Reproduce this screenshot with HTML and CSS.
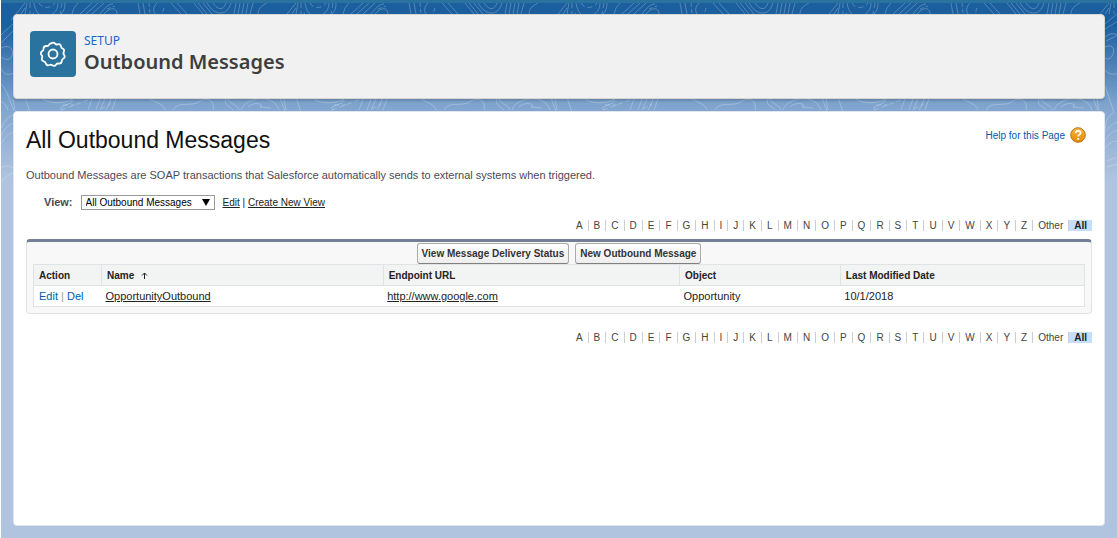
FILE: index.html
```html
<!DOCTYPE html>
<html lang="en">

<head>
    <meta charset="UTF-8">
    <meta name="viewport" content="width=device-width, initial-scale=1.0">
    <title>Outbound Messages</title>
    <link rel="stylesheet" href="styles.css">
</head>

<body>
    <svg class="page-pattern" aria-hidden="true">
        <defs>
            <pattern id="topography" width="271" height="196" patternUnits="userSpaceOnUse">
                <g fill="none" stroke="#fff" stroke-opacity=".24">
                    <path d="M15 14L24 3M10 20l5-6M20 14l4-6M26 3l-2 11M33 3c2 12 7 13 12 13s12-4 12-13M64 3c0 5-1 8-4 11M71 14l2-6 4-5" />
                    <path d="M38 3c3 6 12 6 16 0M29 3v11M61 3l-2 11" stroke-dasharray="5 3" />
                    <path d="M79 14l12-11M85 14L97 3M91 14l12-11M99 14c5-6 8-10 13-10M103 14c7-8 13-6 13 0M137 3l2 11M142 3l2 11M156 3c-4 4-4 8-2 11" />
                    <path d="M106 9l8-3M148 3l1 11M163 8l-2 6" stroke-dasharray="4 2" />
                    <path d="M170 3l10 11M176 3l10 11M193 3l9 11M197 3l9 11M202 3l9 11M206 3c5 8 9 10 14 10s8-4 10-10M212 3c5 7 10 8 13 0M235 3l-2 11M239 3l-2 11M243 3l-2 11M247 3l-2 11M252 3l-3 11M266 3c-6 3-9 6-9 11" />
                    <path d="M0 35l13-12M0 43l13-13M20 24l13-11M20 29l13-8M21 41l12-6M0 48c10-5 13 3 11 8s-7 4-11 1M20 47c7-3 10 1 8 7-2 5-6 6-8 4M0 68c3 8 8 7 13 5M20 70c4 5 9 5 13 3M20 37c5-4 9-4 13-2" />
                    <path d="M0 84c5 4 9 17 13 27M20 86c3 8 6 17 9 27-8 3-8 10-9 17M95 110l4-11M99 110l5-11M105 110c3-5 4-8 5-11M111 110l4-11M149 99c7 4 13 5 15 11M172 110c5-10 19-2 27-9 10-5 15 2 13 9M227 99c3 6 9 5 11 11" />
                    <path d="M240 110c4-13 33-17 38 0M-31 110c4-13 33-17 38 0M247 107c6-6 17-3 12 0l11 1M12 99l2 11M42 99c6 5 23 5 29 0M71 99c3 6-17 7-10 11M87 110l4-11M225 99c-3 6 4 7 7 11" />
                    <path d="M60 110l27-10M62 105h12M100 109l9-5" stroke-dasharray="5 3" />
                    <path d="M0 128c5-10 8-12 13-13M0 136c4-9 9-12 13-13M0 144c4-8 9-11 13-12M20 132c4-5 8-9 13-10M20 140c4-5 8-9 13-10M20 148c4-5 8-7 13-7M22 161l11-4M22 167l11-3M0 168c5-3 8-2 13 0M0 182c5-6 9-9 13-8" stroke-opacity=".2" />
                </g>
            </pattern>
        </defs>
        <rect width="100%" height="196" fill="url(#topography)" />
    </svg>

    <div class="page">
        <header class="page-header">
            <span class="setup-icon">
                <svg width="26" height="26" viewBox="0 0 26 26" fill="none" stroke="#fff" stroke-width="1.8" stroke-linejoin="round" aria-hidden="true">
                    <path d="M11 2.5q2-1.8 4 0q.7 1.4 2.5.8q2.8-.8 3.5 2q0 1.700 1.500 2.200q2.400 1 1.300 3.500q-.9 1.500.2 2.700q1.600 2.200-.5 3.800q-1.700.7-1.700 2.400q-.2 2.800-3 2.700q-1.700-.4-2.700 1q-1.600 2.100-3.900.7q-1.300-1.100-2.800-.3q-2.700 1-3.600-1.600q-.3-1.700-2-2.100q-2.700-.9-1.800-3.500q.8-1.500-.4-2.700q-1.700-2.200.5-3.800q1.500-.8 1.400-2.500q0-2.800 2.800-2.800q1.700.3 2.600-1.100q.7-1.200 2.100-1.400z" />
                    <circle cx="13" cy="13" r="4.500" />
                </svg>
            </span>
            <div class="header-text">
                <p class="header-label">SETUP</p>
                <h1 class="header-title">Outbound Messages</h1>
            </div>
        </header>

        <main class="content">
            <div class="content-head">
                <h2 class="content-title">All Outbound Messages</h2>
                <a class="help-link" href="#">Help for this Page
                    <svg width="16" height="16" viewBox="0 0 16 16" aria-hidden="true">
                        <defs>
                            <linearGradient id="help-fill" x2="0" y2="1">
                                <stop stop-color="#f9b63c" />
                                <stop offset="1" stop-color="#e58a00" />
                            </linearGradient>
                        </defs>
                        <circle cx="8" cy="8" r="7.300" fill="url(#help-fill)" stroke="#b5741c" />
                        <path d="M5.700 6.200c0-3.300 4.800-3 4.800-.3 0 1.800-2.300 1.700-2.300 3.600M8.200 11v1.800" fill="none" stroke="#fff" stroke-width="1.800" />
                    </svg>
                </a>
            </div>
            <p class="description">Outbound Messages are SOAP transactions that Salesforce automatically sends to external systems when triggered.</p>

            <div class="view-bar">
                <label for="view-select">View:</label>
                <span class="select-wrap">
                    <select id="view-select">
                        <option>All Outbound Messages</option>
                    </select>
                </span>
                <span class="view-links"><a href="#">Edit</a> | <a href="#">Create New View</a></span>
            </div>

            <nav class="rolodex" aria-label="Filter by letter">
                <a href="#">A</a><a href="#">B</a><a href="#">C</a><a href="#">D</a><a href="#">E</a><a href="#">F</a><a href="#">G</a><a href="#">H</a><a href="#">I</a><a href="#">J</a><a href="#">K</a><a href="#">L</a><a href="#">M</a><a href="#">N</a><a href="#">O</a><a href="#">P</a><a href="#">Q</a><a href="#">R</a><a href="#">S</a><a href="#">T</a><a href="#">U</a><a href="#">V</a><a href="#">W</a><a href="#">X</a><a href="#">Y</a><a href="#">Z</a><a href="#">Other</a><a href="#" class="active">All</a>
            </nav>

            <section class="list-block">
                <div class="list-buttons">
                    <button type="button">View Message Delivery Status</button>
                    <button type="button">New Outbound Message</button>
                </div>
                <table class="list">
                    <colgroup>
                        <col class="col-action">
                        <col class="col-name">
                        <col class="col-url">
                        <col class="col-object">
                        <col>
                    </colgroup>
                    <thead>
                        <tr>
                            <th>Action</th>
                            <th>Name
                                <svg class="sort-icon" width="7" height="7" viewBox="0 0 7 7" aria-hidden="true">
                                    <path d="M3.500 7V1M1 3.500L3.500 1 6 3.500" fill="none" stroke="#222" />
                                </svg>
                            </th>
                            <th>Endpoint URL</th>
                            <th>Object</th>
                            <th>Last Modified Date</th>
                        </tr>
                    </thead>
                    <tbody>
                        <tr>
                            <td class="actions"><a href="#">Edit</a> | <a href="#">Del</a></td>
                            <td><a href="#">OpportunityOutbound</a></td>
                            <td><a href="#">http://www.google.com</a></td>
                            <td>Opportunity</td>
                            <td>10/1/2018</td>
                        </tr>
                    </tbody>
                </table>
            </section>

            <nav class="rolodex" aria-label="Filter by letter">
                <a href="#">A</a><a href="#">B</a><a href="#">C</a><a href="#">D</a><a href="#">E</a><a href="#">F</a><a href="#">G</a><a href="#">H</a><a href="#">I</a><a href="#">J</a><a href="#">K</a><a href="#">L</a><a href="#">M</a><a href="#">N</a><a href="#">O</a><a href="#">P</a><a href="#">Q</a><a href="#">R</a><a href="#">S</a><a href="#">T</a><a href="#">U</a><a href="#">V</a><a href="#">W</a><a href="#">X</a><a href="#">Y</a><a href="#">Z</a><a href="#">Other</a><a href="#" class="active">All</a>
            </nav>
        </main>
    </div>
</body>

</html>
```
FILE: styles.css
```css
* {
    box-sizing: border-box;
}

body {
    margin: 0;
    position: relative;
    min-height: 100vh;
    display: flex;
    border-left: 1px solid #fff;
    background: #b0c4df linear-gradient(#1b5f9e 0, #1b5f9e 24px, #7fa4ce 105px, #b0c4df 180px) no-repeat;
    font-family: "Liberation Sans", Arial, sans-serif;
    font-size: 11px;
    color: #222;
}

p,
h1,
h2 {
    margin: 0;
    font-weight: normal;
}

.page-pattern {
    position: absolute;
    top: 0;
    left: 0;
    width: 100%;
    height: 196px;
}

.page {
    position: relative;
    flex: 1;
    display: flex;
    flex-direction: column;
    gap: 12px;
    padding: 11px 12px 12px;
    border-top: 3px solid #2a739e;
}

.page-header {
    display: flex;
    gap: 8px;
    padding: 16px 16px 21px;
    background-color: #f1f1f1;
    border: 1px solid #d8d6d0;
    border-radius: 4px;
    box-shadow: 0 2px 2px rgba(0, 0, 0, 0.15);
}

.setup-icon {
    display: flex;
    align-items: center;
    justify-content: center;
    width: 46px;
    height: 46px;
    background-color: #2a739e;
    border-radius: 4px;
}

.header-label {
    margin-top: 1px;
    font-family: "Noto Sans", sans-serif;
    font-size: 12px;
    line-height: 18px;
    color: #1c66cf;
}

.header-title {
    font-family: "Noto Sans", sans-serif;
    font-size: 20px;
    font-weight: 600;
    line-height: 24px;
    color: #3e3e3c;
}

.content {
    flex: 1;
    padding: 12px 12px 20px;
    background-color: #fff;
    border: 1px solid #e0e5ee;
    border-radius: 4px;
}

.content-head {
    display: flex;
    justify-content: space-between;
}

.content-title {
    font-size: 23px;
    line-height: 32px;
    color: #111;
}

.help-link {
    display: flex;
    align-items: center;
    gap: 5px;
    height: 22px;
    margin-right: 6px;
    font-size: 10px;
    color: #015ba7;
    text-decoration: none;
}

.description {
    margin-top: 11px;
    line-height: 16px;
    color: #4a4a56;
}

.view-bar {
    display: flex;
    align-items: center;
    gap: 8px;
    height: 16px;
    margin: 11px 0 8px 18px;
}

.view-bar label {
    font-weight: bold;
    color: #4a4a56;
}

.select-wrap {
    position: relative;
    display: flex;
}

.select-wrap::after {
    content: "";
    position: absolute;
    top: 4px;
    right: 5px;
    border: 4px solid transparent;
    border-top: 7px solid #000;
    border-bottom: 0;
    pointer-events: none;
}

.select-wrap select {
    appearance: none;
    width: 134px;
    height: 15px;
    padding: 0 4px;
    background-color: #fff;
    border: 1px solid #999;
    border-radius: 0;
    font-family: inherit;
    font-size: 10px;
    line-height: 13px;
    color: #000;
}

.view-links {
    font-size: 10px;
}

.view-links a {
    color: #222;
}

.rolodex {
    display: flex;
    justify-content: flex-end;
    padding: 2px 0;
    font-size: 10px;
    line-height: 11px;
}

.rolodex a {
    padding: 0 5px;
    border-right: 1px solid #ccc;
    color: #444;
    text-decoration: none;
}

.rolodex a.active {
    border-right: 0;
    background-color: #c3deff;
    font-weight: bold;
    color: #222;
}

.list-block {
    margin: 6px 0 16px;
    padding: 1px 6px 6px;
    background-color: #f8f8f8;
    border: 1px solid #e0e3e5;
    border-top: 3px solid #747e96;
    border-radius: 4px;
}

.list-buttons {
    display: flex;
    justify-content: center;
    gap: 6px;
}

.list-buttons button {
    height: 21px;
    padding: 0 4px;
    background: linear-gradient(#fff, #eee);
    border: 1px solid #aaa;
    border-bottom-color: #7f7f7f;
    border-radius: 3px;
    font-family: inherit;
    font-size: 10px;
    font-weight: bold;
    color: #333;
}

.list {
    width: 100%;
    table-layout: fixed;
    border-collapse: collapse;
    background-color: #fff;
    border: 1px solid #e0e3e5;
}

.list .col-action {
    width: 68px;
}

.list .col-name {
    width: 26.8%;
}

.list .col-url {
    width: 28.2%;
}

.list .col-object {
    width: 15.3%;
}

.list th,
.list td {
    height: 21px;
    padding: 0 5px;
    border-bottom: 1px solid #e0e3e5;
    text-align: left;
}

.list th {
    background-color: #f2f3f3;
    border-right: 1px solid #e0e3e5;
    font-size: 10px;
}

.list td {
    padding-left: 4px;
}

.list td a {
    color: #222;
}

.list .actions {
    padding-left: 5px;
    color: #999;
}

.list .actions a {
    color: #015ba7;
    text-decoration: none;
}

.sort-icon {
    margin-left: 4px;
}
```
